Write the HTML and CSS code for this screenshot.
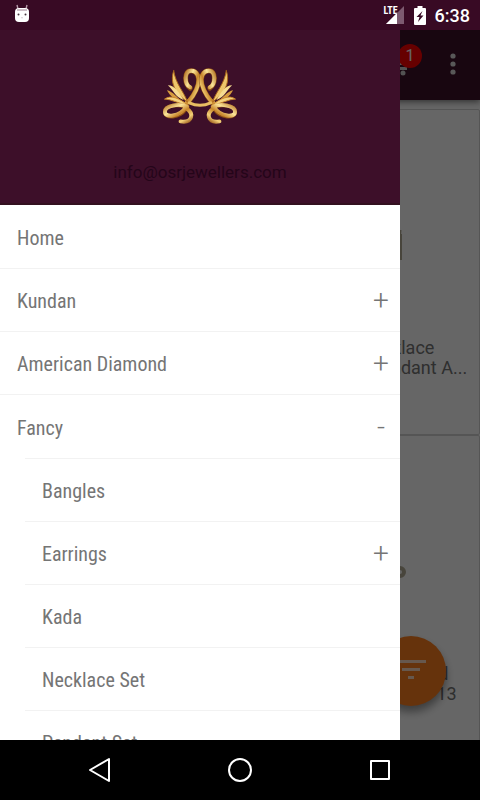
FILE: index.html
```html
<!DOCTYPE html>
<html lang="en">
<head>
    <meta charset="UTF-8">
    <meta name="viewport" content="width=device-width, initial-scale=1.0">
    <title>Jewellers</title>
    <link rel="stylesheet" href="styles.css">
</head>
<body>
    <div class="status-bar">
        <svg class="status-app" width="18" height="20" viewBox="0 0 18 20">
            <path d="M4 1l1 4M14 1l-1 4" stroke="#b79aaa" stroke-width="1.4"/>
            <rect x="2" y="4" width="14" height="14" rx="4" fill="#fff"/>
            <path d="M4 6h10" stroke="#cdbfc7" stroke-width="2"/>
            <circle cx="5.500" cy="10.500" r="1" fill="#47353f"/>
            <circle cx="12.500" cy="10.500" r="1" fill="#47353f"/>
            <path d="M8 13.500q1 1 2 0" fill="none" stroke="#d9ccd3"/>
        </svg>
        <div class="status-right">
            <span class="network">LTE</span>
            <svg width="18" height="18" viewBox="0 0 18 18">
                <path d="M18 0v18H0z" fill="#7d5a70"/>
                <path d="M11 7v11H0z" fill="#fff"/>
            </svg>
            <svg class="battery" width="12" height="19" viewBox="0 0 12 19">
                <path d="M3.500 0h5v2H11q1 0 1 1v15q0 1-1 1H1q-1 0-1-1V3q0-1 1-1h2.500z" fill="#fff"/>
                <path d="M8.500 5L2.500 11h3L4 16l5.500-6.500h-3z" fill="#380a24"/>
            </svg>
            <span class="clock">6:38</span>
        </div>
    </div>

    <div class="screen">
        <div class="shop">
            <header class="toolbar">
                <button class="tool cart" type="button" aria-label="Cart">
                    <svg width="24" height="24" viewBox="0 0 24 24" fill="#ccc">
                        <path d="M1 1h4l1 3h14l-3 8H8l-1 2h15v3H4l2-5L3 4H1z"/>
                        <circle cx="7" cy="20" r="2.500"/>
                        <circle cx="18" cy="20" r="2.500"/>
                    </svg>
                    <span class="badge">1</span>
                </button>
                <button class="tool" type="button" aria-label="More options">
                    <svg width="6" height="22" viewBox="0 0 6 22" fill="#ddd">
                        <circle cx="3" cy="3" r="2.600"/>
                        <circle cx="3" cy="11" r="2.600"/>
                        <circle cx="3" cy="19" r="2.600"/>
                    </svg>
                </button>
            </header>
            <div class="products">
                <article class="product"></article>
                <article class="product">
                    <svg class="photo" viewBox="0 0 220 220" fill="none" stroke="#b3ad96">
                        <path d="M40 40C40 160 148 160 149 112" stroke-width="5"/>
                        <path d="M149 116v26" stroke-width="6"/>
                    </svg>
                    <p>Kundan Necklace<br>Designer Pendant A...</p>
                </article>
                <article class="product"></article>
                <article class="product">
                    <svg class="photo" viewBox="0 0 220 220" fill="none" stroke="#b3ad96">
                        <path d="M40 30C40 120 146 160 149 124" stroke-width="3"/>
                        <circle cx="150" cy="128" r="4" stroke-width="4"/>
                    </svg>
                    <p>American Diamond<br>Necklace Set No. 13</p>
                </article>
            </div>
            <button class="filter" type="button" aria-label="Filter">
                <svg width="32" height="22" viewBox="0 0 32 22" fill="#ffdcc4">
                    <path d="M1 1h30v3H1zM7 9h18v3H7zM13 17h6v3h-6z"/>
                </svg>
            </button>
        </div>
        <div class="scrim"></div>

        <nav class="drawer">
            <div class="drawer-header">
                <svg class="logo" width="74" height="60" viewBox="0 0 76 60" fill="none" stroke-linecap="round">
                    <defs>
                        <linearGradient id="gold" x1="0" y1="0" x2="1" y2="1">
                            <stop offset="0" stop-color="#b8782a"/>
                            <stop offset=".3" stop-color="#fbe59a"/>
                            <stop offset=".55" stop-color="#c8862c"/>
                            <stop offset=".8" stop-color="#f4d27a"/>
                            <stop offset="1" stop-color="#9c5d1c"/>
                        </linearGradient>
                        <g id="wing">
                            <path d="M28 20C22 16 21 2 29 2C35 2 38 9 36 16C34 24 28 33 23 37" stroke="#8c4d14" stroke-width="5"/>
                            <path d="M28 19C22 16 21 2 29 2C35 2 38 9 36 16C34 24 28 33 23 36" stroke="url(#gold)" stroke-width="4"/>
                            <path d="M11 2C6 16 15 27 25 34C22 24 13 16 11 2z" fill="#edc66b" stroke="#a8651c" stroke-width="1"/>
                            <path d="M5 17C12 17 17 25 21 32C12 29 11 22 5 17z" fill="#f6dc91"/>
                            <path d="M4 22C10 23 15 30 19 33C11 31 8 29 4 22z" fill="#d69b3e"/>
                            <path d="M2 31C8 26 18 31 25 37C16 36 8 31 2 31z" fill="#f3d280" stroke="#c8862c" stroke-width="1"/>
                            <path d="M25 40C16 35 2 38 2 44C2 52 17 50 23 42" stroke="#8c4d14" stroke-width="4"/>
                            <path d="M25 39C16 35 2 38 2 44C2 51 17 49 23 40C33 46 30 56 18 54" stroke="url(#gold)" stroke-width="4"/>
                        </g>
                    </defs>
                    <use href="#wing"/>
                    <use href="#wing" transform="matrix(-1 0 0 1 76 0)"/>
                    <path d="M27 35Q38 40 49 35" stroke="#e9bd62" stroke-width="3"/>
                </svg>
                <a class="mail" href="mailto:info@osrjewellers.com">info@osrjewellers.com</a>
            </div>
            <ul class="menu">
                <li class="row"><a href="#">Home</a></li>
                <li class="row"><a href="#">Kundan</a><button type="button" aria-label="Expand Kundan">+</button></li>
                <li class="row"><a href="#">American Diamond</a><button type="button" aria-label="Expand American Diamond">+</button></li>
                <li>
                    <div class="row open"><a href="#">Fancy</a><button type="button" aria-label="Collapse Fancy">-</button></div>
                    <ul class="submenu">
                        <li class="row"><a href="#">Bangles</a></li>
                        <li class="row"><a href="#">Earrings</a><button type="button" aria-label="Expand Earrings">+</button></li>
                        <li class="row"><a href="#">Kada</a></li>
                        <li class="row"><a href="#">Necklace Set</a></li>
                        <li class="row"><a href="#">Pendant Set</a></li>
                    </ul>
                </li>
            </ul>
        </nav>
    </div>

    <div class="nav-bar">
        <button type="button" aria-label="Back">
            <svg width="26" height="26" viewBox="0 0 26 26"><path d="M22 2v22L3 13z"/></svg>
        </button>
        <button type="button" aria-label="Home">
            <svg width="26" height="26" viewBox="0 0 26 26"><circle cx="13" cy="13" r="11"/></svg>
        </button>
        <button type="button" aria-label="Recent apps">
            <svg width="26" height="26" viewBox="0 0 26 26"><rect x="4" y="4" width="18" height="18"/></svg>
        </button>
    </div>
</body>
</html>
```

FILE: styles.css
```css
* {
    box-sizing: border-box;
}
body {
    margin: 0;
    height: 100vh;
    display: flex;
    flex-direction: column;
    font-family: Roboto, sans-serif;
    background: #000;
    overflow: hidden;
}
button {
    padding: 0;
    border: none;
    background: none;
    font-family: inherit;
    cursor: pointer;
}
a {
    color: inherit;
    text-decoration: none;
}
ul {
    list-style: none;
    margin: 0;
    padding: 0;
}
.status-bar {
    height: 30px;
    flex: none;
    display: flex;
    align-items: center;
    justify-content: space-between;
    padding: 0 10px 0 13px;
    background: #380a24;
    color: #fff;
}
.status-app {
    margin-bottom: 2px;
}
.status-right {
    display: flex;
    align-items: center;
}
.network {
    align-self: flex-start;
    margin-right: -12px;
    font-family: "Roboto Condensed", "Liberation Sans Narrow", sans-serif;
    font-size: 10px;
    font-weight: bold;
    line-height: 12px;
}
.battery {
    margin: 0 9px 0 10px;
}
.clock {
    font-size: 18px;
    font-weight: 500;
}
.screen {
    flex: 1;
    min-height: 0;
    position: relative;
    overflow: hidden;
}
.shop {
    height: 100%;
    display: flex;
    flex-direction: column;
    background: #fff;
}
.toolbar {
    height: 70px;
    flex: none;
    display: flex;
    align-items: center;
    justify-content: flex-end;
    padding-right: 15px;
    gap: 32px;
    background: #3d0f29;
    box-shadow: 0 2px 6px rgba(0, 0, 0, 0.5);
    z-index: 1;
}
.tool {
    height: 24px;
    min-width: 24px;
}
.cart {
    position: relative;
}
.badge {
    position: absolute;
    top: -9px;
    right: -13px;
    width: 24px;
    height: 24px;
    border-radius: 50%;
    background: #f00;
    color: #fff;
    font-size: 16px;
    line-height: 24px;
}
.products {
    display: grid;
    grid-template-columns: 1fr 1fr;
    grid-auto-rows: 326px;
    padding-top: 9px;
}
.product {
    padding: 8px;
    border: 1px solid #d4d4d4;
    border-radius: 2px;
}
.photo {
    display: block;
    width: 100%;
    height: 220px;
}
.product p {
    margin: 0 0 0 46px;
    font-size: 18px;
    line-height: 20px;
    white-space: nowrap;
    color: #757575;
}
.filter {
    position: absolute;
    right: 34px;
    bottom: 34px;
    width: 70px;
    height: 70px;
    border-radius: 50%;
    background: #ff8020;
    box-shadow: 0 6px 8px rgba(0, 0, 0, 0.4);
    z-index: 1;
}
.scrim {
    position: absolute;
    inset: 0;
    background: rgba(0, 0, 0, 0.6);
    z-index: 2;
}
.drawer {
    position: absolute;
    top: 0;
    bottom: 0;
    left: 0;
    width: calc(100% - 80px);
    max-width: 400px;
    background: #fff;
    overflow: hidden;
    z-index: 3;
}
.drawer-header {
    display: flex;
    flex-direction: column;
    align-items: center;
    gap: 32px;
    height: 175px;
    padding-top: 38px;
    background: #3d0f29;
    border-bottom: 2px solid #33101f;
}
.mail {
    font-size: 17px;
    line-height: 24px;
    color: #240519;
}
.menu {
    padding-top: 1px;
    font-family: "Roboto Condensed", "Liberation Sans Narrow", Roboto, sans-serif;
    font-size: 20px;
    color: #757575;
}
.row {
    height: 63px;
    display: flex;
    align-items: center;
    padding-left: 17px;
    border-bottom: 1px solid #f2f2f2;
}
.row a {
    flex: 1;
    padding-top: 2px;
}
.row button {
    width: 38px;
    height: 62px;
    font-family: Roboto, sans-serif;
    font-size: 28px;
    font-weight: 300;
    color: #757575;
}
.open {
    border-bottom: none;
}
.submenu {
    margin-left: 25px;
    border-top: 1px solid #f2f2f2;
}
.nav-bar {
    height: 60px;
    flex: none;
    display: flex;
    align-items: center;
    justify-content: center;
    gap: 114px;
}
.nav-bar svg {
    display: block;
    fill: none;
    stroke: #fff;
    stroke-width: 2;
    stroke-linejoin: round;
}
```
